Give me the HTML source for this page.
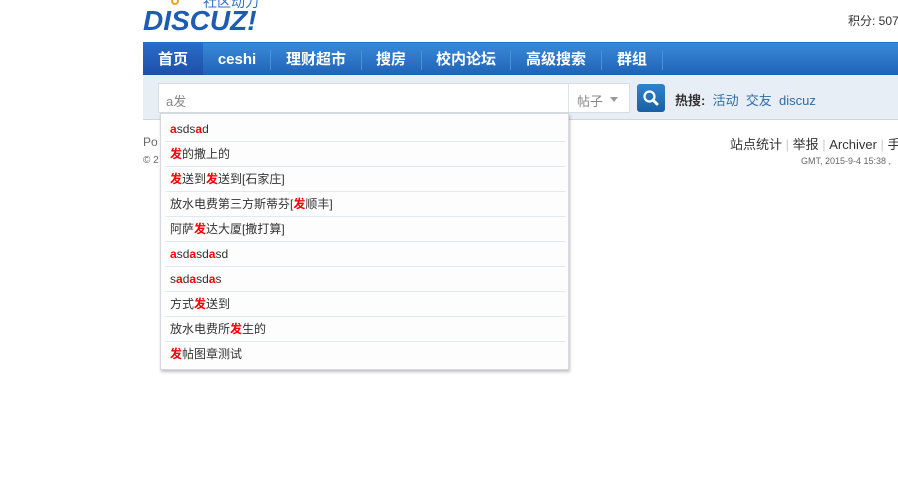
<!DOCTYPE html>
<html><head><meta charset="utf-8"><style>
*{margin:0;padding:0;box-sizing:border-box}
body{width:898px;height:495px;overflow:hidden;background:#fff;font-family:"Liberation Sans","Noto Sans CJK SC",sans-serif;font-size:12px;color:#333;position:relative}
.a{position:absolute;white-space:nowrap}
.nav{left:143px;top:42px;width:755px;height:33px;background:linear-gradient(#3a8ad8,#1f62b8);border-top:1px solid #2b6fc4}
.nav span{position:absolute;top:0;height:33px;line-height:33px;color:#fff;font-weight:bold;font-size:15px;text-align:center}
.sep{position:absolute;top:7px;width:1px;height:20px;background:#4f8fd4}
.band{left:143px;top:75px;width:755px;height:45px;background:#e8eef5;border-bottom:1px solid #cfd8e1}
.r{position:absolute;left:4px;width:400px;height:25px;line-height:24px;padding-left:5px;font-size:12px;color:#333;border-bottom:1px solid #e3e8ee;white-space:nowrap}
.r b{color:#f00}
</style></head><body>
<div class="a" style="left:143px;top:0;width:130px;height:38px;overflow:hidden">
<div class="a" style="left:28px;top:-3px;width:8px;height:8px;border:2px solid #f0a21e;border-radius:50%"></div>
<div class="a" style="left:60px;top:-8px;color:#2f72c0;font-size:14px">社区动力</div>
<div class="a" style="left:0;top:5px;color:#1d5cb5;font-size:28px;font-weight:bold;font-style:italic;letter-spacing:0px;font-family:'Liberation Sans',sans-serif">DISCUZ!</div>
</div>
<div class="a" style="left:848px;top:12px;font-size:12px;color:#333">积分: 507</div>
<div class="a nav">
<span style="left:0;width:60px;background:linear-gradient(#2a6cc8,#1d4fa8)">首页</span>
<span style="left:62px;width:64px">ceshi</span><div class="sep" style="left:127px"></div>
<span style="left:128px;width:90px">理财超市</span><div class="sep" style="left:218px"></div>
<span style="left:219px;width:58px">搜房</span><div class="sep" style="left:278px"></div>
<span style="left:279px;width:88px">校内论坛</span><div class="sep" style="left:367px"></div>
<span style="left:368px;width:90px">高级搜索</span><div class="sep" style="left:458px"></div>
<span style="left:459px;width:60px">群组</span><div class="sep" style="left:519px"></div>
</div>
<div class="a band"></div>
<div class="a" style="left:158px;top:83px;width:472px;height:30px;background:#fff;border:1px solid #d5dde5"></div>
<div class="a" style="left:166px;top:91px;color:#888;font-size:13px">a发</div>
<div class="a" style="left:568px;top:84px;width:1px;height:28px;background:#dde3e9"></div>
<div class="a" style="left:577px;top:91px;color:#888;font-size:13px">帖子</div>
<div class="a" style="left:610px;top:97px;border:4px solid transparent;border-top:5px solid #999"></div>
<div class="a" style="left:637px;top:84px;width:28px;height:28px;background:linear-gradient(#2e84cc,#1a5fa6);border-radius:3px">
<svg width="28" height="28"><circle cx="12.5" cy="12.5" r="5" stroke="#fff" stroke-width="2.2" fill="none"/><line x1="16" y1="16" x2="20" y2="20" stroke="#fff" stroke-width="3" stroke-linecap="round"/></svg></div>
<div class="a" style="left:675px;top:90px;font-size:13px"><b>热搜:</b> <span style="color:#2d6da8">&nbsp;活动 &nbsp;交友 &nbsp;discuz</span></div>
<div class="a" style="left:143px;top:135px;color:#666">Po</div>
<div class="a" style="left:143px;top:155px;color:#666;font-size:10px">© 2</div>
<div class="a" style="left:730px;top:134px;font-size:13px;color:#333">站点统计 <span style="color:#ccc">|</span> 举报 <span style="color:#ccc">|</span> Archiver <span style="color:#ccc">|</span> 手</div>
<div class="a" style="left:801px;top:156px;font-size:9px;color:#666">GMT, 2015-9-4 15:38 ,</div>
<div class="a" style="left:160px;top:113px;width:409px;height:257px;background:#fdfdfd;border:1px solid #d5d9de;box-shadow:1px 2px 3px rgba(0,0,0,.25)">
<div class="r" style="top:3px"><b>a</b>sds<b>a</b>d</div>
<div class="r" style="top:28px"><b>发</b>的撒上的</div>
<div class="r" style="top:53px"><b>发</b>送到<b>发</b>送到[石家庄]</div>
<div class="r" style="top:78px">放水电费第三方斯蒂芬[<b>发</b>顺丰]</div>
<div class="r" style="top:103px">阿萨<b>发</b>达大厦[撒打算]</div>
<div class="r" style="top:128px"><b>a</b>sd<b>a</b>sd<b>a</b>sd</div>
<div class="r" style="top:153px">s<b>a</b>d<b>a</b>sd<b>a</b>s</div>
<div class="r" style="top:178px">方式<b>发</b>送到</div>
<div class="r" style="top:203px">放水电费所<b>发</b>生的</div>
<div class="r" style="top:228px;border:none"><b>发</b>帖图章测试</div>
</div>
</body></html>
